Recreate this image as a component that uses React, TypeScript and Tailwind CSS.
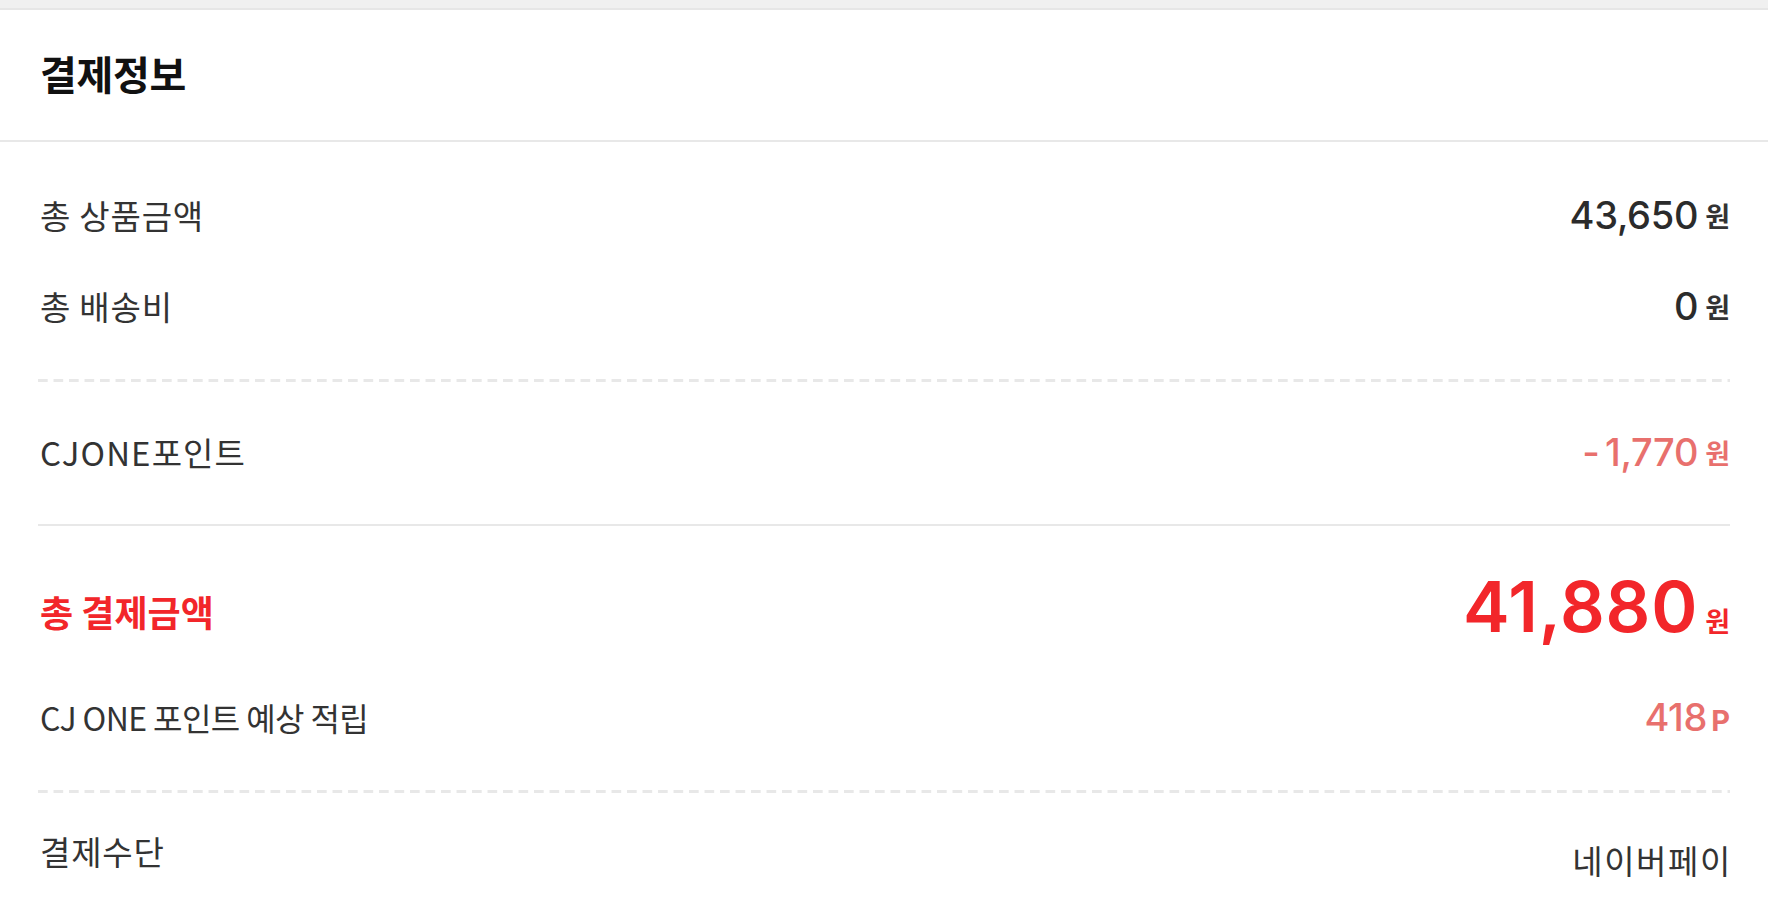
import React from "react";

function Dashed() {
  return (
    <div className="h-[3px] w-full bg-[linear-gradient(to_right,#e8e8e8_10px,transparent_10px)] bg-[length:15.5px_3px] bg-repeat-x" />
  );
}

function Won({ className }: { className: string }) {
  return <span className={className}>원</span>;
}

export default function App() {
  return (
    <div className="w-[1768px] h-[918px] overflow-hidden bg-white font-['Noto_Sans_CJK_KR',sans-serif] text-[#333]">
      <div className="h-[10px] bg-[#f0f0f0] border-b-2 border-[#e6e6e6]" />
      <div className="h-[132px] flex items-center px-[40px] pb-[4px] border-b-2 border-[#e8e8e8]">
        <h1 className="text-[40px] font-bold text-[#111] tracking-[-0.3px] leading-none">결제정보</h1>
      </div>

      <div className="px-[38px]">
        {/* section 1 */}
        <div className="pt-[49px] pb-[49px] flex flex-col gap-[43px]">
          <div className="h-[48px] flex items-center justify-between">
            <span className="text-[33px] tracking-[0.8px] leading-none pl-[2px]">총 상품금액</span>
            <span className="flex items-center">
              <span className="font-['Inter',sans-serif] text-[38px] font-medium tracking-[-0.3px] text-[#2b2b2b] leading-none">43,650</span>
              <Won className="ml-[7px] text-[27px] font-bold text-[#333] leading-none" />
            </span>
          </div>
          <div className="h-[48px] flex items-center justify-between">
            <span className="text-[33px] tracking-[0.8px] leading-none pl-[2px]">총 배송비</span>
            <span className="flex items-center">
              <span className="font-['Inter',sans-serif] text-[38px] font-medium tracking-[-0.3px] text-[#2b2b2b] leading-none">0</span>
              <Won className="ml-[7px] text-[27px] font-bold text-[#333] leading-none" />
            </span>
          </div>
        </div>
        <Dashed />

        {/* section 2 */}
        <div className="pt-[46px] pb-[48px]">
          <div className="h-[48px] flex items-center justify-between">
            <span className="text-[33px] tracking-[1.1px] leading-none pl-[2px]">CJONE포인트</span>
            <span className="flex items-center text-[#e8706d]">
              <span className="font-['Inter',sans-serif] text-[38px] font-medium leading-none">-</span>
              <span className="ml-[5px] font-['Inter',sans-serif] text-[38px] font-medium tracking-[-0.3px] leading-none">1,770</span>
              <Won className="ml-[7px] text-[27px] font-bold leading-none" />
            </span>
          </div>
        </div>
        <div className="h-[2px] bg-[#e8e8e8]" />

        {/* section 3 */}
        <div className="pt-[49px] pb-[49px] flex flex-col gap-[46px]">
          <div className="h-[72px] flex items-center justify-between">
            <span className="text-[36px] font-bold text-[#f2262a] tracking-[0px] leading-none pl-[2px]">총 결제금액</span>
            <span className="flex items-baseline text-[#f2262a] -mt-[8px]">
              <span className="font-['Inter',sans-serif] text-[70px] font-semibold tracking-[0.8px] leading-none">41,880</span>
              <Won className="ml-[7px] text-[27px] font-bold leading-none" />
            </span>
          </div>
          <div className="h-[48px] flex items-center justify-between">
            <span className="text-[32px] tracking-[-0.6px] leading-none pl-[2px]">CJ ONE 포인트 예상 적립</span>
            <span className="flex items-baseline text-[#e8706d]">
              <span className="font-['Inter',sans-serif] text-[38px] font-medium tracking-[-0.3px] leading-none">418</span>
              <span className="ml-[4px] font-['Inter',sans-serif] text-[29px] font-bold leading-none">P</span>
            </span>
          </div>
        </div>
        <Dashed />

        {/* section 4 */}
        <div className="pt-[42px]">
          <div className="h-[48px] flex items-start justify-between">
            <span className="text-[33px] tracking-[0.8px] leading-none pl-[2px]">결제수단</span>
            <span className="text-[33px] tracking-[1.6px] leading-none pt-[9px] -mr-[2px]">네이버페이</span>
          </div>
        </div>
      </div>
    </div>
  );
}
